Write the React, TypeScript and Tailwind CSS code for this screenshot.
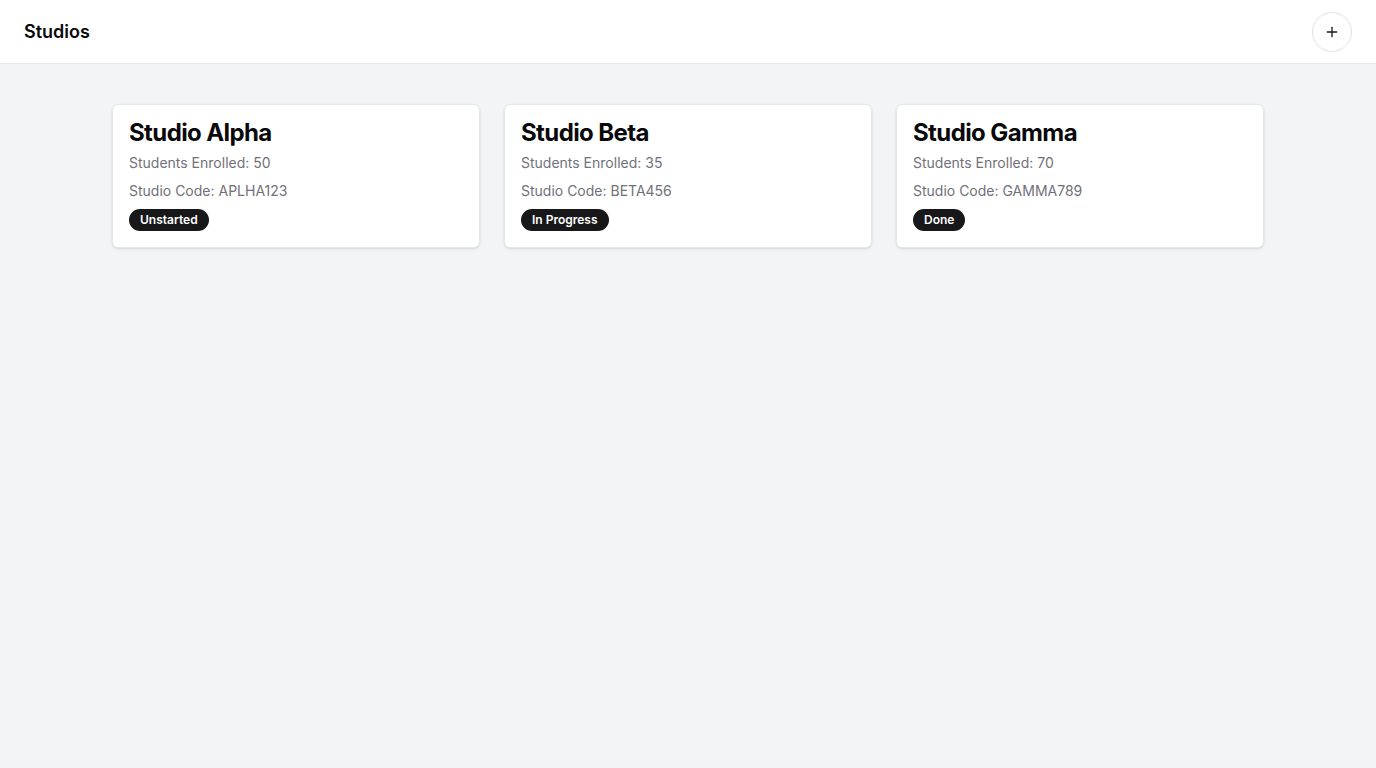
import React from "react";
import { Plus } from "lucide-react";

const studios = [
  { name: "Studio Alpha", students: 50, code: "APLHA123", status: "Unstarted" },
  { name: "Studio Beta", students: 35, code: "BETA456", status: "In Progress" },
  { name: "Studio Gamma", students: 70, code: "GAMMA789", status: "Done" },
];

export default function App() {
  return (
    <div className="min-h-screen bg-[#f3f4f6] font-['Inter',sans-serif] text-[#09090b]">
      <header className="h-16 bg-white border-b border-[#e5e7eb] flex items-center justify-between px-6">
        <h1 className="text-lg font-semibold">Studios</h1>
        <button className="w-10 h-10 rounded-full border border-[#e4e4e7] bg-white flex items-center justify-center">
          <Plus size={16} strokeWidth={2} className="text-[#18181b]" />
        </button>
      </header>
      <main className="max-w-6xl mx-auto pt-10">
        <div className="grid grid-cols-3 gap-6">
          {studios.map((s) => (
            <div
              key={s.name}
              className="bg-white border border-[#e5e7eb] rounded-md shadow-sm p-4"
            >
              <h2 className="text-2xl font-bold leading-6 tracking-tight">{s.name}</h2>
              <p className="mt-2 text-sm leading-5 text-[#71717a]">Students Enrolled: {s.students}</p>
              <p className="mt-2 text-sm leading-5 text-[#71717a]">Studio Code: {s.code}</p>
              <span className="mt-2 inline-flex items-center rounded-full bg-[#18181b] px-[11px] py-[3px] text-xs font-semibold leading-4 text-white">
                {s.status}
              </span>
            </div>
          ))}
        </div>
      </main>
    </div>
  );
}
